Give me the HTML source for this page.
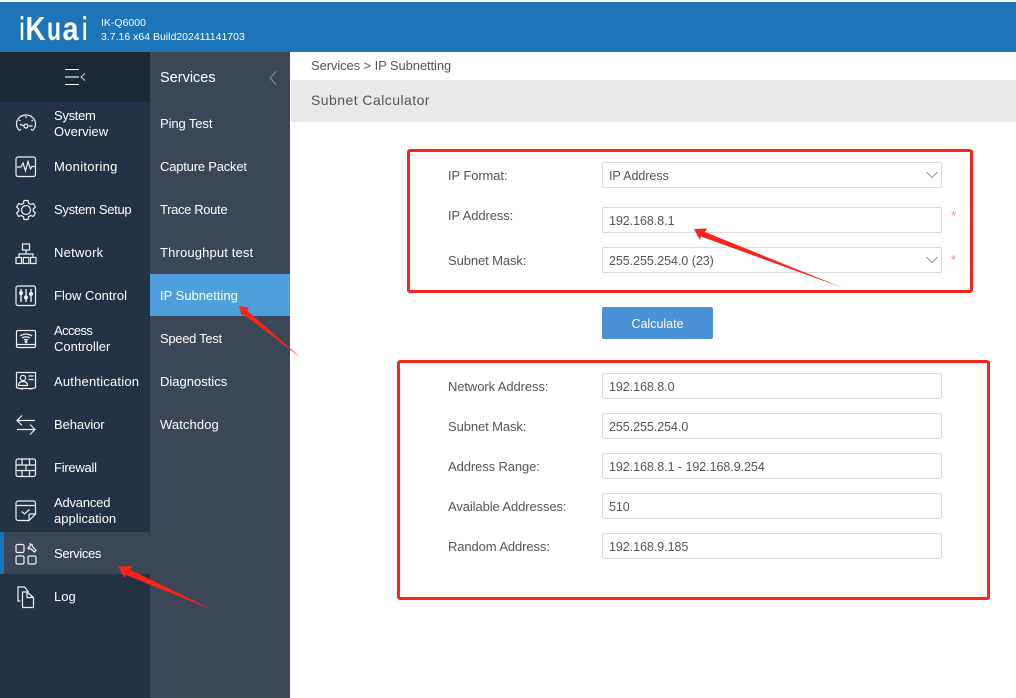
<!DOCTYPE html>
<html><head><meta charset="utf-8"><title>iKuai</title>
<style>
*{box-sizing:border-box;margin:0;padding:0}
html,body{width:1016px;height:698px;overflow:hidden;background:#fff;font-family:"Liberation Sans","Noto Sans CJK SC",sans-serif}
.a{position:absolute}
#top{left:0;top:2px;width:1016px;height:50px;background:#1c75b8}
#nav{left:0;top:52px;width:150px;height:646px;background:#233244}
#tog{left:0;top:52px;width:150px;height:50px;background:#1d2836}
#sub{left:150px;top:52px;width:140px;height:646px;background:#3b4757}
.n{position:absolute;left:54px;color:#fff;font-size:13px;line-height:16px;white-space:nowrap}
.s{position:absolute;left:160px;color:#fff;font-size:13px;line-height:16px;white-space:nowrap}
.l{position:absolute;left:448px;margin-top:1px;color:#555;font-size:13px;line-height:16px;letter-spacing:-.1px;white-space:nowrap}
.i{position:absolute;left:602px;width:340px;height:26px;border:1px solid #ddd;border-radius:2px;background:#fff;color:#555;font-size:12.5px;line-height:26px;padding-left:6px;white-space:nowrap;letter-spacing:-.05px}
.r{position:absolute;border:3px solid #f9241a;border-radius:3px}
.st{position:absolute;left:951px;color:#f28a8a;font-size:13px;line-height:14px}
svg{position:absolute;overflow:visible}
svg.ic{left:15px;width:22px;height:22px;fill:none;stroke:#eef1f4;stroke-width:1.2}
</style></head><body>
<div class="a" id="top"></div>
<svg style="left:0;top:0" width="100" height="52"><text y="40" fill="#fff" font-weight="700" font-family="Liberation Sans" font-size="33"><tspan x="19.500" textLength="5" lengthAdjust="spacingAndGlyphs">i</tspan><tspan x="25.500" textLength="20" lengthAdjust="spacingAndGlyphs">K</tspan><tspan x="47" textLength="14" lengthAdjust="spacingAndGlyphs">u</tspan><tspan x="62.500" textLength="16" lengthAdjust="spacingAndGlyphs">a</tspan><tspan x="82" textLength="5.500" lengthAdjust="spacingAndGlyphs">i</tspan></text></svg>
<div class="a" style="left:101px;top:16px;color:#fff;font-size:10.5px;line-height:14px;white-space:nowrap">IK-Q6000<br>3.7.16 x64 Build202411141703</div>
<div class="a" id="nav"></div><div class="a" id="tog"></div><div class="a" id="sub"></div>
<div class="a" style="left:0;top:532px;width:150px;height:42px;background:#3b4757"></div>
<div class="a" style="left:0;top:532px;width:4px;height:42px;background:#1c75b8"></div>
<div class="a" style="left:150px;top:274px;width:140px;height:42px;background:#4f9fdc"></div>

<svg style="left:60px;top:66px" width="30" height="20" fill="none"><path d="M5 3.500H19M5 18.500H19" stroke="#fff"/><path d="M5 11H19" stroke="#9aa0a8" stroke-width="2"/><path d="M25 7.500L21 11L25 14.500" stroke="#ddd"/></svg>

<div class="n" style="top:108px"><span style="letter-spacing:-.3px">System</span><br>Overview</div>
<div class="n" style="top:159px;letter-spacing:.3px">Monitoring</div>
<div class="n" style="top:202px;letter-spacing:-.3px">System Setup</div>
<div class="n" style="top:245px;letter-spacing:.25px">Network</div>
<div class="n" style="top:288px">Flow Control</div>
<div class="n" style="top:323px"><span style="letter-spacing:-.6px">Access</span><br>Controller</div>
<div class="n" style="top:374px;letter-spacing:.2px">Authentication</div>
<div class="n" style="top:417px;letter-spacing:-.1px">Behavior</div>
<div class="n" style="top:460px;letter-spacing:-.25px">Firewall</div>
<div class="n" style="top:495px"><span style="letter-spacing:-.2px">Advanced</span><br>application</div>
<div class="n" style="top:546px;letter-spacing:-.35px">Services</div>
<div class="n" style="top:589px">Log</div>

<svg class="ic" style="top:112px" viewBox="0 0 22 22"><path d="M4.500 18.500C2.500 16.800 1.500 14.500 1.500 12C1.500 6.800 5.800 3 11 3S20.500 6.800 20.500 12C20.500 14.500 19.500 16.800 17.500 18.500"/><path d="M5 12.500L8.500 13.500M14 14H17.500M11 4V6M4 8L5.500 9M18 8L16.500 9M4.500 18.500L6 17M17.500 18.500L16 17"/><circle cx="11" cy="14" r="2"/></svg>
<svg class="ic" style="top:156px" viewBox="0 0 22 22"><rect x="1" y="1" width="19.500" height="19.500" rx="2"/><path d="M2 11H6L8 7L10.500 15L13 5.500L15.500 13L17 10.500H20"/></svg>
<svg class="ic" style="top:199px" viewBox="0 0 22 22"><path d="M9 1.500H13L13.600 4.300L15.700 5.500L18.400 4.600L20.400 8L18.300 9.900V12.100L20.400 14L18.400 17.400L15.700 16.500L13.600 17.700L13 20.500H9L8.400 17.700L6.300 16.500L3.600 17.400L1.600 14L3.700 12.100V9.900L1.600 8L3.600 4.600L6.300 5.500L8.400 4.300Z"/><circle cx="11" cy="11" r="4.500"/></svg>
<svg class="ic" style="top:243px" viewBox="0 0 22 22"><rect x="7.500" y="1" width="7" height="6"/><path d="M11 7V11M4 14V11H18V14"/><rect x="1" y="14.500" width="5.500" height="6"/><rect x="8.300" y="14.500" width="5.500" height="6"/><rect x="15.500" y="14.500" width="5.500" height="6"/></svg>
<svg class="ic" style="top:285px" viewBox="0 0 22 22"><rect x="1" y="1" width="19.500" height="19.500" rx="2"/><path d="M6 4V17M11 4V17M16 4V17" stroke-width="1.400"/><circle cx="6" cy="8" r="1.500" fill="#e4e8ec"/><circle cx="11" cy="12.500" r="1.500" fill="#e4e8ec"/><circle cx="16" cy="9" r="1.500" fill="#e4e8ec"/></svg>
<svg class="ic" style="top:328px" viewBox="0 0 22 22"><path d="M3 2.500H19C20 2.500 20.500 3 20.500 4V18C20.500 19 20 19.500 19 19.500H3C2 19.500 1.500 19 1.500 18V4C1.500 3 2 2.500 3 2.500ZM1.500 16.500H20.500"/><path d="M5 8C8.500 5.500 13.500 5.500 17 8M7 10C9.500 8.500 12.500 8.500 15 10M9 12C10 11.300 12 11.300 13 12" stroke-width="1.300"/><circle cx="11" cy="13.800" r=".8" fill="#e4e8ec"/></svg>
<svg class="ic" style="top:371px" viewBox="0 0 22 22"><path d="M1.500 17V1.500H20.500V17M1.500 17H3.500M3.500 17.500H18.500M20.500 17H18.500M7 17V19M15 17V19"/><circle cx="8" cy="7" r="2.600"/><path d="M3.500 14.500C3.500 11.500 5.500 10.500 8 10.500S12.500 11.500 12.500 14.500ZM13.500 5H18.500M13.500 8.500H18.500"/></svg>
<svg class="ic" style="top:414px" viewBox="0 0 22 22"><path d="M2 6.500H20M7 1.500L2 6.500L7 11.500M2 15.500H20M15 10.500L20 15.500L15 20.500"/></svg>
<svg class="ic" style="top:457px" viewBox="0 0 22 22"><rect x="1" y="2" width="19.500" height="17.500" rx="2"/><path d="M1 8H20.500M1 13.500H20.500M7 2V8M14.500 2V8M11 8V13.500M7 13.500V19.500M14.500 13.500V19.500"/></svg>
<svg class="ic" style="top:500px" viewBox="0 0 22 22"><path d="M14 20.500H3C2 20.500 1 19.500 1 18.500V3C1 2 2 1 3 1H18.500C19.500 1 20.500 2 20.500 3V14L14 20.500V15.500C14 14.500 14.500 14 15.500 14H20.500M1 5.500H20.500M6.500 11.500L9.500 14L14.500 9.500"/></svg>
<svg class="ic" style="top:543px" viewBox="0 0 22 22"><rect x="1" y="1.500" width="8" height="8" rx="1.500"/><rect x="1" y="13" width="8" height="8" rx="1.500"/><rect x="13" y="13" width="8" height="8" rx="1.500"/><path d="M13 5L15.500 2.500L15 1L17 1.500L17.500 3.500L21 7.500L19.500 9L15.500 5.500L13.500 6Z" stroke-width="1.300"/></svg>
<svg class="ic" style="top:586px" viewBox="0 0 22 22"><path d="M5.500 15.500H3V1.500H9.500L13.500 6.500M7.500 6.500H12L18.500 12V22H7.500ZM12 6.500V12H18.500" transform="translate(0 -.5)"/></svg>

<div class="a" style="left:160px;top:69px;color:#fff;font-size:14.5px;line-height:18px">Services</div>
<svg style="left:268px;top:70px" width="10" height="16" fill="none"><path d="M8 1.500L2 8L8 14.500" stroke="#8b95a1"/></svg>
<div class="s" style="top:116px;letter-spacing:-.1px">Ping Test</div>
<div class="s" style="top:159px;letter-spacing:-.2px">Capture Packet</div>
<div class="s" style="top:202px;letter-spacing:-.35px">Trace Route</div>
<div class="s" style="top:245px;letter-spacing:.15px">Throughput test</div>
<div class="s" style="top:288px">IP Subnetting</div>
<div class="s" style="top:331px;letter-spacing:-.3px">Speed Test</div>
<div class="s" style="top:374px">Diagnostics</div>
<div class="s" style="top:417px;letter-spacing:.1px">Watchdog</div>

<div class="a" style="left:311px;top:58px;color:#555;font-size:13px;line-height:16px;letter-spacing:-.1px;white-space:nowrap">Services &gt; IP Subnetting</div>
<div class="a" style="left:291px;top:80px;width:725px;height:42px;background:#e9e9e9"></div>
<div class="a" style="left:311px;top:92px;color:#555;font-size:14px;line-height:17px;letter-spacing:.45px;white-space:nowrap">Subnet Calculator</div>

<div class="r" style="left:407px;top:149px;width:566px;height:144px"></div>
<div class="l" style="top:167px">IP Format:</div>
<div class="i" style="top:162px">IP Address</div>
<svg style="left:926px;top:171px" width="12" height="8" fill="none"><path d="M.5 1L6 6.500L11.500 1" stroke="#999"/></svg>
<div class="l" style="top:207px">IP Address:</div>
<div class="i" style="top:207px">192.168.8.1</div>
<div class="st" style="top:209px">*</div>
<div class="l" style="top:252px">Subnet Mask:</div>
<div class="i" style="top:247px">255.255.254.0 (23)</div>
<svg style="left:926px;top:256px" width="12" height="8" fill="none"><path d="M.5 1L6 6.500L11.500 1" stroke="#999"/></svg>
<div class="st" style="top:253px">*</div>

<div class="a" style="left:602px;top:307px;width:111px;height:32px;background:#4a90d6;border-radius:2px;color:#fff;font-size:12.5px;line-height:34px;text-align:center">Calculate</div>

<div class="r" style="left:397px;top:360px;width:593px;height:240px"></div>
<div class="l" style="top:378px">Network Address:</div>
<div class="i" style="top:373px">192.168.8.0</div>
<div class="l" style="top:418px">Subnet Mask:</div>
<div class="i" style="top:413px">255.255.254.0</div>
<div class="l" style="top:458px">Address Range:</div>
<div class="i" style="top:453px">192.168.8.1 - 192.168.9.254</div>
<div class="l" style="top:498px">Available Addresses:</div>
<div class="i" style="top:493px">510</div>
<div class="l" style="top:538px">Random Address:</div>
<div class="i" style="top:533px">192.168.9.185</div>

<svg style="left:0;top:0" width="1016" height="698" fill="#f9241a">
<polygon points="694,229 707,228.500 705,232 842,287.500 701,236.500 700,240"/>
<polygon points="239,306 249,307.500 247,310.500 300,357 243,314 242,317"/>
<polygon points="118,566.500 132,566 130,569.500 213,610 126,575 124.500,578"/>
</svg>
</body></html>
